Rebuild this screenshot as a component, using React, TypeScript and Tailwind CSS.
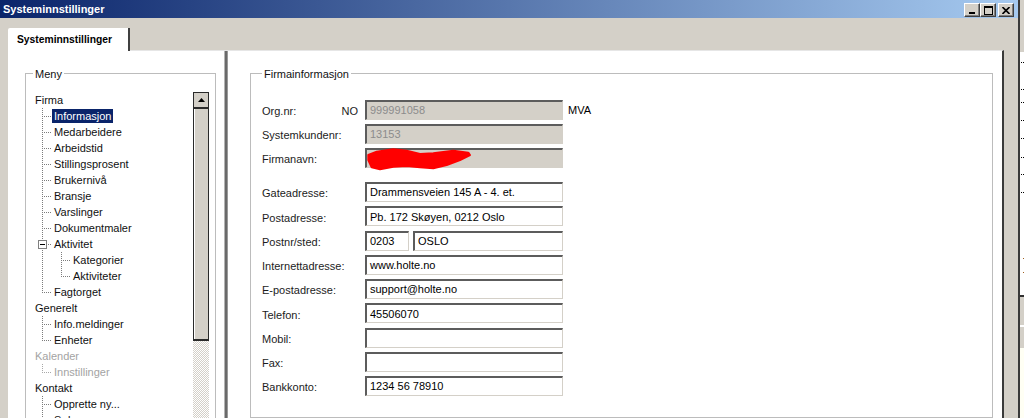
import type { ReactNode } from 'react';

type Guide = 'tee' | 'end' | 'pipe' | 'open';

interface MenuNode {
  label: string;
  guides: Guide[];
  selected?: boolean;
  disabled?: boolean;
}

const menu: MenuNode[] = [
  { label: 'Firma', guides: [] },
  { label: 'Informasjon', guides: ['tee'], selected: true },
  { label: 'Medarbeidere', guides: ['tee'] },
  { label: 'Arbeidstid', guides: ['tee'] },
  { label: 'Stillingsprosent', guides: ['tee'] },
  { label: 'Brukernivå', guides: ['tee'] },
  { label: 'Bransje', guides: ['tee'] },
  { label: 'Varslinger', guides: ['tee'] },
  { label: 'Dokumentmaler', guides: ['tee'] },
  { label: 'Aktivitet', guides: ['open'] },
  { label: 'Kategorier', guides: ['pipe', 'tee'] },
  { label: 'Aktiviteter', guides: ['pipe', 'end'] },
  { label: 'Fagtorget', guides: ['end'] },
  { label: 'Generelt', guides: [] },
  { label: 'Info.meldinger', guides: ['tee'] },
  { label: 'Enheter', guides: ['end'] },
  { label: 'Kalender', guides: [], disabled: true },
  { label: 'Innstillinger', guides: ['end'], disabled: true },
  { label: 'Kontakt', guides: [] },
  { label: 'Opprette ny...', guides: ['tee'] },
  { label: 'Søk', guides: ['tee'] },
];

function CaptionButton({ children, className = '' }: { children: ReactNode; className?: string }) {
  return (
    <div
      className={`flex h-[14px] w-[16px] items-center justify-center border border-t-white border-l-white border-r-[#404040] border-b-[#404040] bg-[#d4d0c8] shadow-[inset_-1px_-1px_0_#808080] ${className}`}
    >
      {children}
    </div>
  );
}

function TitleBar() {
  return (
    <div className="flex h-[18px] items-center justify-between bg-[linear-gradient(90deg,#0a246a,#a6caf0)] pl-[3px] pr-[4px]">
      <span className="text-[11px] font-bold text-white">Systeminnstillinger</span>
      <div className="mt-[2px] flex">
        <CaptionButton>
          <svg width="8" height="7" viewBox="0 0 8 7">
            <rect x="1" y="5" width="6" height="2" fill="#000" />
          </svg>
        </CaptionButton>
        <CaptionButton>
          <svg width="9" height="9" viewBox="0 0 9 9" shapeRendering="crispEdges">
            <path d="M0 0h9v9H0z M1 2v6h7V2z" fill="#000" fillRule="evenodd" />
          </svg>
        </CaptionButton>
        <CaptionButton className="ml-[2px]">
          <svg width="8" height="7" viewBox="0 0 8 7">
            <path d="M0.5 0 L7.5 7 M7.5 0 L0.5 7" stroke="#000" strokeWidth="1.6" />
          </svg>
        </CaptionButton>
      </div>
    </div>
  );
}

function GuideCell({ kind, color }: { kind: Guide; color: string }) {
  return (
    <svg width="19" height="16" className="shrink-0" shapeRendering="crispEdges">
      {kind !== 'open' && (
        <line x1="9.5" y1="0" x2="9.5" y2={kind === 'end' ? 9 : 16} stroke={color} strokeDasharray="1 1" />
      )}
      {(kind === 'tee' || kind === 'end') && (
        <line x1="11" y1="8.5" x2="19" y2="8.5" stroke={color} strokeDasharray="1 1" />
      )}
      {kind === 'open' && (
        <>
          <line x1="9.5" y1="0" x2="9.5" y2="4" stroke={color} strokeDasharray="1 1" />
          <line x1="9.5" y1="14" x2="9.5" y2="16" stroke={color} strokeDasharray="1 1" />
          <rect x="5.5" y="4.5" width="8" height="8" fill="#fff" stroke="#808080" />
          <line x1="7" y1="8.5" x2="12" y2="8.5" stroke="#000" />
          <line x1="15" y1="8.5" x2="19" y2="8.5" stroke={color} strokeDasharray="1 1" />
        </>
      )}
    </svg>
  );
}

function TreeRow({ node }: { node: MenuNode }) {
  const tone = node.selected
    ? 'bg-[#0a246a] text-white'
    : node.disabled
      ? 'text-[#a3a3a3]'
      : 'text-[#101010]';
  return (
    <div className="flex h-[16px] items-center">
      {node.guides.map((g, i) => (
        <GuideCell key={i} kind={g} color={node.disabled ? '#a8a8a8' : '#7c7c7c'} />
      ))}
      <span className={`h-[14px] whitespace-nowrap px-[2px] leading-[14px] ${tone}`}>{node.label}</span>
    </div>
  );
}

function ScrollBar() {
  return (
    <div className="flex w-[16px] shrink-0 flex-col">
      <div className="flex h-[17px] justify-center border border-b-2 border-[#2a2a2a] bg-[#d4d0c8] pt-[5px]">
        <svg width="7" height="4" viewBox="0 0 7 4">
          <polygon points="3.5,0 7,4 0,4" fill="#000" />
        </svg>
      </div>
      <div className="h-[232px] border-x border-b-2 border-[#2a2a2a] bg-[#d4d0c8] shadow-[inset_1px_0_0_#ffffff]" />
      <div className="flex-1 bg-[repeating-conic-gradient(#d4d0c8_0_25%,#ffffff_0_50%)] bg-[length:2px_2px]" />
    </div>
  );
}

function GroupBox({ title, className = '', children }: { title: string; className?: string; children: ReactNode }) {
  return (
    <div className={`flex flex-col border border-[#bcbcbc] ${className}`}>
      <div className="-mt-[6px] h-[13px] self-start bg-white px-[2px] leading-[13px] text-[#111]">{title}</div>
      {children}
    </div>
  );
}

function TextBox({
  value = '',
  disabled,
  width = 'w-[198px]',
  children,
}: {
  value?: string;
  disabled?: boolean;
  width?: string;
  children?: ReactNode;
}) {
  return (
    <div
      className={`relative flex h-[20px] shrink-0 items-center border-t-2 border-l-2 border-r border-b border-t-[#5c5c5c] border-l-[#5c5c5c] border-r-[#d4d0c8] border-b-[#d4d0c8] pl-[3px] ${width} ${
        disabled ? 'bg-[#d4d0c8] text-[#8c8c8c]' : 'bg-white text-black'
      }`}
    >
      {value}
      {children}
    </div>
  );
}

function Field({ label, children }: { label: ReactNode; children: ReactNode }) {
  return (
    <div className="flex h-[20px] items-center">
      <div className="flex w-[103px] shrink-0 justify-between pr-[7px] pt-[3px] text-[#1c1c1c]">{label}</div>
      {children}
    </div>
  );
}

function CompanyInfo() {
  return (
    <GroupBox title="Firmainformasjon" className="ml-[22px] mt-[22px] h-[380px] w-[743px] pl-[11px]">
      <div className="mt-[19px] flex flex-col gap-[4px]">
        <Field
          label={
            <>
              <span>Org.nr:</span>
              <span>NO</span>
            </>
          }
        >
          <TextBox value="999991058" disabled />
          <span className="ml-[5px] pt-[1px] text-black">MVA</span>
        </Field>
        <Field label="Systemkundenr:">
          <TextBox value="13153" disabled />
        </Field>
        <Field label="Firmanavn:">
          <TextBox disabled>
            {/* sladdet navn */}
            <svg className="pointer-events-none absolute -left-[2px] -top-[2px] overflow-visible" width="110" height="24">
              <polygon
                points="3.3,7 11.7,3.7 28.3,1.3 41.7,2.7 55,6 68.3,5.3 88.3,2.7 103.3,4.7 105,7 95,12 81.7,17 68.3,20.3 55,19.3 41.7,18 28.3,18.7 15,21.3 6.7,19.3 3.3,12"
                fill="#ff0000"
                stroke="#ff0000"
                strokeWidth="2"
                strokeLinejoin="round"
              />
            </svg>
          </TextBox>
        </Field>
      </div>
      <div className="mt-[14px] flex flex-col gap-[4.25px]">
        <Field label="Gateadresse:">
          <TextBox value="Drammensveien 145 A - 4. et." />
        </Field>
        <Field label="Postadresse:">
          <TextBox value="Pb. 172 Skøyen, 0212 Oslo" />
        </Field>
        <Field label="Postnr/sted:">
          <TextBox value="0203" width="w-[44px]" />
          <div className="ml-[4px]">
            <TextBox value="OSLO" width="w-[150px]" />
          </div>
        </Field>
        <Field label="Internettadresse:">
          <TextBox value="www.holte.no" />
        </Field>
        <Field label="E-postadresse:">
          <TextBox value="support@holte.no" />
        </Field>
        <Field label="Telefon:">
          <TextBox value="45506070" />
        </Field>
        <Field label="Mobil:">
          <TextBox />
        </Field>
        <Field label="Fax:">
          <TextBox />
        </Field>
        <Field label="Bankkonto:">
          <TextBox value="1234 56 78910" />
        </Field>
      </div>
    </GroupBox>
  );
}

function MenuPanel() {
  return (
    <div className="flex w-[215px] shrink-0 flex-col">
      <GroupBox title="Meny" className="ml-[16px] mt-[22px] h-[380px] w-[191px] pl-[7px]">
        <div className="mt-[11px] flex min-h-0 flex-1 pr-[6px]">
          <div className="flex min-w-0 flex-1 flex-col">
            {menu.map((node) => (
              <TreeRow key={node.label} node={node} />
            ))}
          </div>
          <ScrollBar />
        </div>
      </GroupBox>
    </div>
  );
}

function BackWindowEdge() {
  return (
    <div className="flex w-[6px] shrink-0 flex-col border-l-2 border-[#3a3a3a]">
      <div className="h-[52px] bg-[#d4d0c8]" />
      <div className="flex h-[243px] flex-col bg-white pl-[1px]">
        <div className="mt-[10px] h-px w-[3px] border-t border-dotted border-black" />
        <div className="mt-[26px] h-px w-[3px] border-t border-dotted border-black" />
        <div className="mt-[12px] h-px w-[3px] border-t border-dotted border-black" />
        <div className="mt-[17px] h-px w-[3px] border-t border-dotted border-black" />
        <div className="mt-[17px] h-px w-[3px] border-t border-dotted border-black" />
        <div className="mt-[18px] h-px w-[3px] border-t border-dotted border-black" />
        <div className="mt-[16px] h-px w-[3px] border-t border-dotted border-black" />
        <div className="mt-[17px] h-px w-[3px] border-t border-dotted border-black" />
        <div className="ml-[2px] mt-[65px] h-px w-px bg-[#a06020]" />
        <div className="ml-[2px] mt-[13px] h-px w-px bg-[#a06020]" />
      </div>
      <div className="h-[30px] border-t-2 border-[#303030] bg-[#d4d0c8]" />
      <div className="h-[23px] border-t-2 border-white bg-[#d4d0c8]" />
      <div className="flex-1 bg-[#fffff4]" />
    </div>
  );
}

export default function App() {
  return (
    <div className="flex h-[418px] w-[1024px] overflow-hidden bg-[#d4d0c8] font-['Liberation_Sans',Arial,sans-serif] text-[11px]">
      <div className="flex w-[1018px] shrink-0 flex-col">
        <TitleBar />
        <div className="flex min-h-0 flex-1 flex-col pl-[8px] pr-[14px] pt-[10px]">
          <div className="flex">
            <div className="relative z-10 -mb-px flex h-[23px] w-[122px] items-center rounded-tl-[2px] border-r-2 border-r-[#404040] bg-white pl-[9px] text-[10.3px] font-bold text-black">
              Systeminnstillinger
            </div>
          </div>
          <div className="flex min-h-0 flex-1 border-l border-t border-r-2 border-l-white border-t-[#e6e6e6] border-r-[#3a3a3a] bg-white">
            <MenuPanel />
            <div className="w-[4px] shrink-0 border-l border-r border-l-[#b4b4b4] border-r-[#9a9a9a] bg-[#6a6a6a]" />
            <div className="flex min-w-0 flex-1 flex-col">
              <CompanyInfo />
            </div>
          </div>
        </div>
      </div>
      <BackWindowEdge />
    </div>
  );
}
